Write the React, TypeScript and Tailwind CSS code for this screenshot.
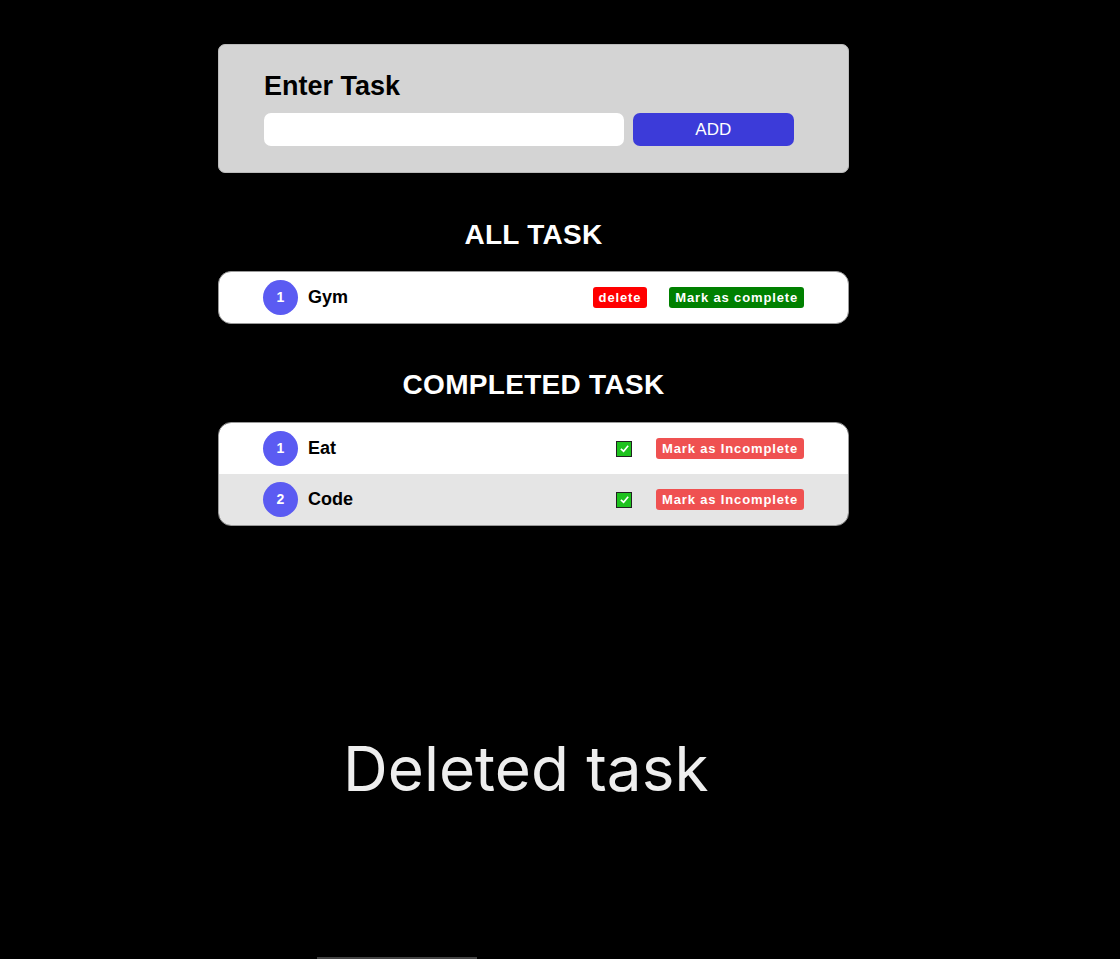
import React from "react";

const Circle = ({ n }: { n: number }) => (
  <div className="w-[35px] h-[35px] rounded-full bg-[#5b5bf2] text-white flex items-center justify-center text-[14px] font-bold shrink-0">
    {n}
  </div>
);

const Check = () => (
  <div className="w-[16px] h-[16px] border border-[#222] bg-[#1ec21e] flex items-center justify-center">
    <svg width="11" height="11" viewBox="0 0 12 12">
      <path d="M2 6.5 L5 9 L10 3" stroke="white" strokeWidth="1.8" fill="none" />
    </svg>
  </div>
);

export default function App() {
  return (
    <div className="min-h-[959px] bg-black relative overflow-hidden" style={{ fontFamily: '"Liberation Sans", Arial, sans-serif' }}>
      <div className="ml-[218px] w-[631px] pt-[44px]">
        <div className="bg-[#d4d4d4] rounded-[7px] border border-[#bbb] pl-[45px] pr-[54px] pt-[25px] pb-[26px]">
          <h2 className="text-[27px] font-bold text-black leading-[32px]">Enter Task</h2>
          <div className="flex gap-[9px] mt-[11px]">
            <div className="w-[361px] h-[33px] bg-white rounded-[7px]" />
            <div className="w-[162px] h-[33px] bg-[#3c3bd9] rounded-[7px] text-white text-[17px] flex items-center justify-center">ADD</div>
          </div>
        </div>

        <h2 className="text-white text-[28px] font-bold text-center mt-[46px] leading-[32px] tracking-[0.3px]">ALL TASK</h2>
        <div className="mt-[20px] bg-white rounded-[13px] border border-[#999] overflow-hidden">
          <div className="h-[51px] flex items-center pl-[44px] pr-[44px]">
            <Circle n={1} />
            <span className="ml-[10px] text-[18px] font-bold text-black">Gym</span>
            <div className="ml-auto flex items-center gap-[22px]">
              <span className="bg-[#ff0000] text-white font-bold text-[13px] tracking-[0.85px] rounded-[3px] h-[21px] px-[6px] flex items-center">delete</span>
              <span className="bg-[#008000] text-white font-bold text-[13px] tracking-[0.85px] rounded-[3px] h-[21px] px-[6px] flex items-center">Mark as complete</span>
            </div>
          </div>
        </div>

        <h2 className="text-white text-[28px] font-bold text-center mt-[45px] leading-[32px] tracking-[0.3px]">COMPLETED TASK</h2>
        <div className="mt-[21px] rounded-[13px] border border-[#999] overflow-hidden">
          {[
            { n: 1, t: "Eat", bg: "bg-white" },
            { n: 2, t: "Code", bg: "bg-[#e5e5e5]" },
          ].map((r) => (
            <div key={r.n} className={`${r.bg} h-[51px] flex items-center pl-[44px] pr-[44px]`}>
              <Circle n={r.n} />
              <span className="ml-[10px] text-[18px] font-bold text-black">{r.t}</span>
              <div className="ml-auto flex items-center gap-[24px]">
                <Check />
                <span className="bg-[#ef5151] text-white font-bold text-[13px] tracking-[0.85px] rounded-[3px] h-[21px] px-[6px] flex items-center">Mark as Incomplete</span>
              </div>
            </div>
          ))}
        </div>
      </div>

      <div className="mt-[203px] ml-[343px] text-[#eeeeee] text-[62px] leading-[80px]" style={{ fontFamily: 'Inter, sans-serif' }}>
        Deleted task
      </div>

      <div className="absolute left-[317px] bottom-0 w-[160px] h-[2px] bg-[#444]" />
    </div>
  );
}
